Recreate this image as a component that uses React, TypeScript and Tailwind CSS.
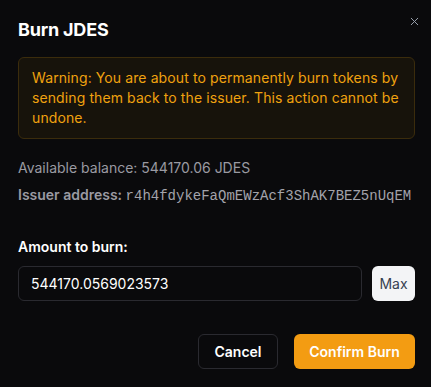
import { X } from 'lucide-react'

export default function App() {
  return (
    <div className="min-h-[387px] w-full bg-[#0a0a0c] font-['Inter',sans-serif] text-white">
      <div className="relative pl-[18px] pr-[16px] pt-[18px] pb-[17px]">
        <button className="absolute right-[10px] top-[15px] text-gray-400" aria-label="Close">
          <X className="h-[13px] w-[13px]" strokeWidth={1.8} />
        </button>

        <h2 className="text-[18px] font-bold leading-[24px] tracking-[-0.2px]">Burn JDES</h2>

        <div className="mt-[15px] rounded-md border border-[#3b2c0c] bg-[#17130b] px-[13px] py-[10px] text-[14px] leading-[20px] tracking-[0.1px] text-[#f0a20f]">
          Warning: You are about to permanently burn tokens by sending them back to the issuer. This action cannot be undone.
        </div>

        <div className="mt-[20px] space-y-[9px] text-[14px] leading-[18px] text-[#9a9aa2]">
          <p>Available balance: 544170.06 JDES</p>
          <p className="leading-[18px]">
            <span className="font-semibold">Issuer address: </span>
            <span className="font-['Liberation_Mono',monospace] text-[14px] leading-[18px] text-[#a3a3ab]">r4h4fdykeFaQmEWzAcf3ShAK7BEZ5nUqEM</span>
          </p>
        </div>

        <label className="mt-[33px] block text-[14px] font-semibold leading-[18px]">Amount to burn:</label>

        <div className="mt-[10px] flex gap-[10px]">
          <input
            className="h-[35px] flex-1 rounded-md border border-[#2a2a30] bg-transparent px-[12px] text-[14px] text-white outline-none"
            defaultValue="544170.0569023573"
          />
          <button className="h-[35px] w-[43px] rounded-md bg-[#f3f4f6] text-[14px] text-[#374151]">Max</button>
        </div>

        <div className="mt-[33px] flex justify-end gap-[16px]">
          <button className="h-[35px] w-[80px] rounded-md border border-[#2a2a30] text-[14px] font-semibold">Cancel</button>
          <button className="h-[35px] w-[121px] rounded-md bg-[#f39c12] text-[14px] font-semibold text-white">Confirm Burn</button>
        </div>
      </div>
    </div>
  )
}
